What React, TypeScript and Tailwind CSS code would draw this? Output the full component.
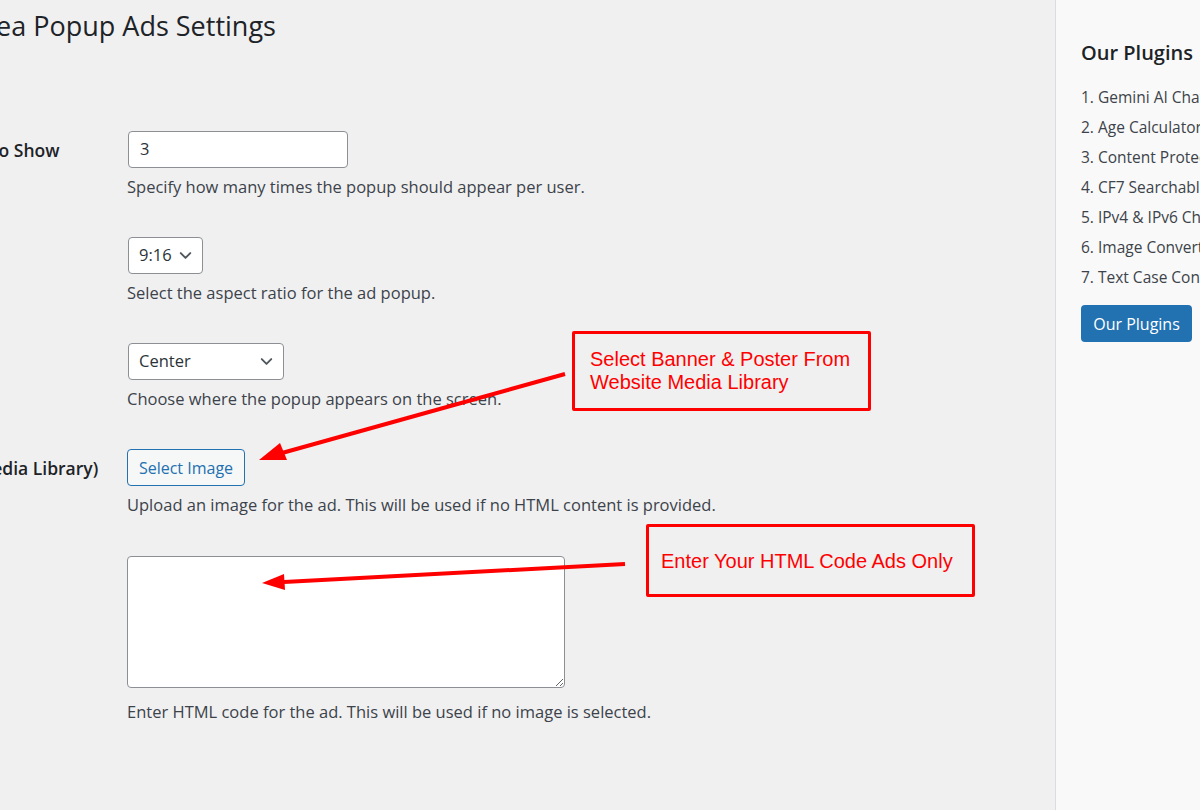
import { ChevronDown } from "lucide-react";

const font = "font-['Open_Sans','Noto_Sans',sans-serif]";

const plugins = [
  "1. Gemini AI Chat Assistant",
  "2. Age Calculator",
  "3. Content Protector",
  "4. CF7 Searchable Dropdown",
  "5. IPv4 & IPv6 Checker",
  "6. Image Converter",
  "7. Text Case Converter",
];

function Row({
  label,
  labelShift,
  description,
  descGap = "mt-[9px]",
  children,
}: {
  label?: string;
  labelShift?: string;
  description: string;
  descGap?: string;
  children: React.ReactNode;
}) {
  return (
    <div className="flex">
      <div className="w-[127px] shrink-0 overflow-hidden pt-[6px]">
        {label && (
          <div
            className={`whitespace-nowrap text-[17.5px] font-semibold text-[#1d2327] ${labelShift}`}
          >
            {label}
          </div>
        )}
      </div>
      <div className="flex flex-col items-start">
        {children}
        <p className={`${descGap} h-[20px] whitespace-nowrap text-[16.5px] leading-[20px] text-[#3c434a]`}>
          {description}
        </p>
      </div>
    </div>
  );
}

function Select({ value, width }: { value: string; width: string }) {
  return (
    <div
      className={`flex h-[37px] ${width} items-center justify-between rounded-[4px] border border-[#8c8f94] bg-white pl-[10px] pr-[7px] text-[16.5px] text-[#2c3338]`}
    >
      <span>{value}</span>
      <ChevronDown className="h-[19px] w-[19px] text-[#50575e]" strokeWidth={2.4} />
    </div>
  );
}

export default function App() {
  return (
    <div className={`relative flex h-[810px] w-[1200px] overflow-hidden bg-[#f0f0f1] ${font}`}>
      {/* main settings area */}
      <main className="w-[1055px] shrink-0">
        <h1 className="ml-[-28px] mt-[6px] whitespace-nowrap text-[27px] leading-[40px] text-[#1d2327]">
          Idea Popup Ads Settings
        </h1>

        <div className="mt-[85px] flex flex-col gap-[40px]">
          <Row label="Times to Show" labelShift="ml-[-63px]" description="Specify how many times the popup should appear per user.">
            <div className="ml-px flex h-[37px] w-[220px] items-center rounded-[4px] border border-[#8c8f94] bg-white px-[11px] text-[16.5px] text-[#2c3338]">
              3
            </div>
          </Row>

          <Row label="Aspect Ratio" labelShift="ml-[-200px]" description="Select the aspect ratio for the ad popup.">
            <div className="ml-px">
              <Select value="9:16" width="w-[75px]" />
            </div>
          </Row>

          <Row label="Position" labelShift="ml-[-200px]" description="Choose where the popup appears on the screen.">
            <div className="ml-px">
              <Select value="Center" width="w-[156px]" />
            </div>
          </Row>

          <Row label="Ad Image (Media Library)" labelShift="ml-[-113px]" description="Upload an image for the ad. This will be used if no HTML content is provided.">
            <button className="h-[37px] w-[118px] rounded-[4px] border border-[#2271b1] bg-[#f6f7f7] text-[16px] text-[#2271b1]">
              Select Image
            </button>
          </Row>

          <Row descGap="mt-[14px]" description="Enter HTML code for the ad. This will be used if no image is selected.">
            <textarea className="mt-[1px] block h-[132px] w-[438px] rounded-[4px] border border-[#8c8f94] bg-white" />
          </Row>
        </div>
      </main>

      {/* sidebar */}
      <aside className="flex-1 border-l border-[#dcdcde] bg-[#f9f9f9] pl-[25px] pt-[39px]">
        <h2 className="whitespace-nowrap text-[20px] font-semibold leading-[28px] text-[#1d2327]">
          Our Plugins
        </h2>
        <ul className="mt-[15px] flex flex-col">
          {plugins.map((p) => (
            <li key={p} className="h-[30px] whitespace-nowrap text-[15.5px] leading-[30px] text-[#3c434a]">
              {p}
            </li>
          ))}
        </ul>
        <button className="mt-[13px] h-[37px] w-[111px] rounded-[4px] bg-[#2271b1] text-[16px] text-white">
          Our Plugins
        </button>
      </aside>

      {/* annotations */}
      <div className="absolute left-[572px] top-[331px] flex h-[80px] w-[299px] items-center rounded-[2px] border-[3px] border-[#ff0000] pl-[15px] font-['Liberation_Sans',Arial,sans-serif] text-[20px] leading-[23px] text-[#ff0000]">
        Select Banner &amp; Poster From
        <br />
        Website Media Library
      </div>
      <div className="absolute left-[646px] top-[524px] flex h-[73px] w-[329px] items-center rounded-[2px] border-[3px] border-[#ff0000] pl-[12px] font-['Liberation_Sans',Arial,sans-serif] text-[20px] text-[#ff0000]">
        Enter Your HTML Code Ads Only
      </div>
      <svg className="pointer-events-none absolute left-0 top-0" width="1200" height="810">
        <line x1="565" y1="374" x2="282" y2="453" stroke="#ff0000" strokeWidth="4" />
        <polygon points="259,460 280,443 287,460" fill="#ff0000" />
        <line x1="625" y1="564" x2="284" y2="582" stroke="#ff0000" strokeWidth="4" />
        <polygon points="262,583 284,574 285,590" fill="#ff0000" />
      </svg>
    </div>
  );
}
